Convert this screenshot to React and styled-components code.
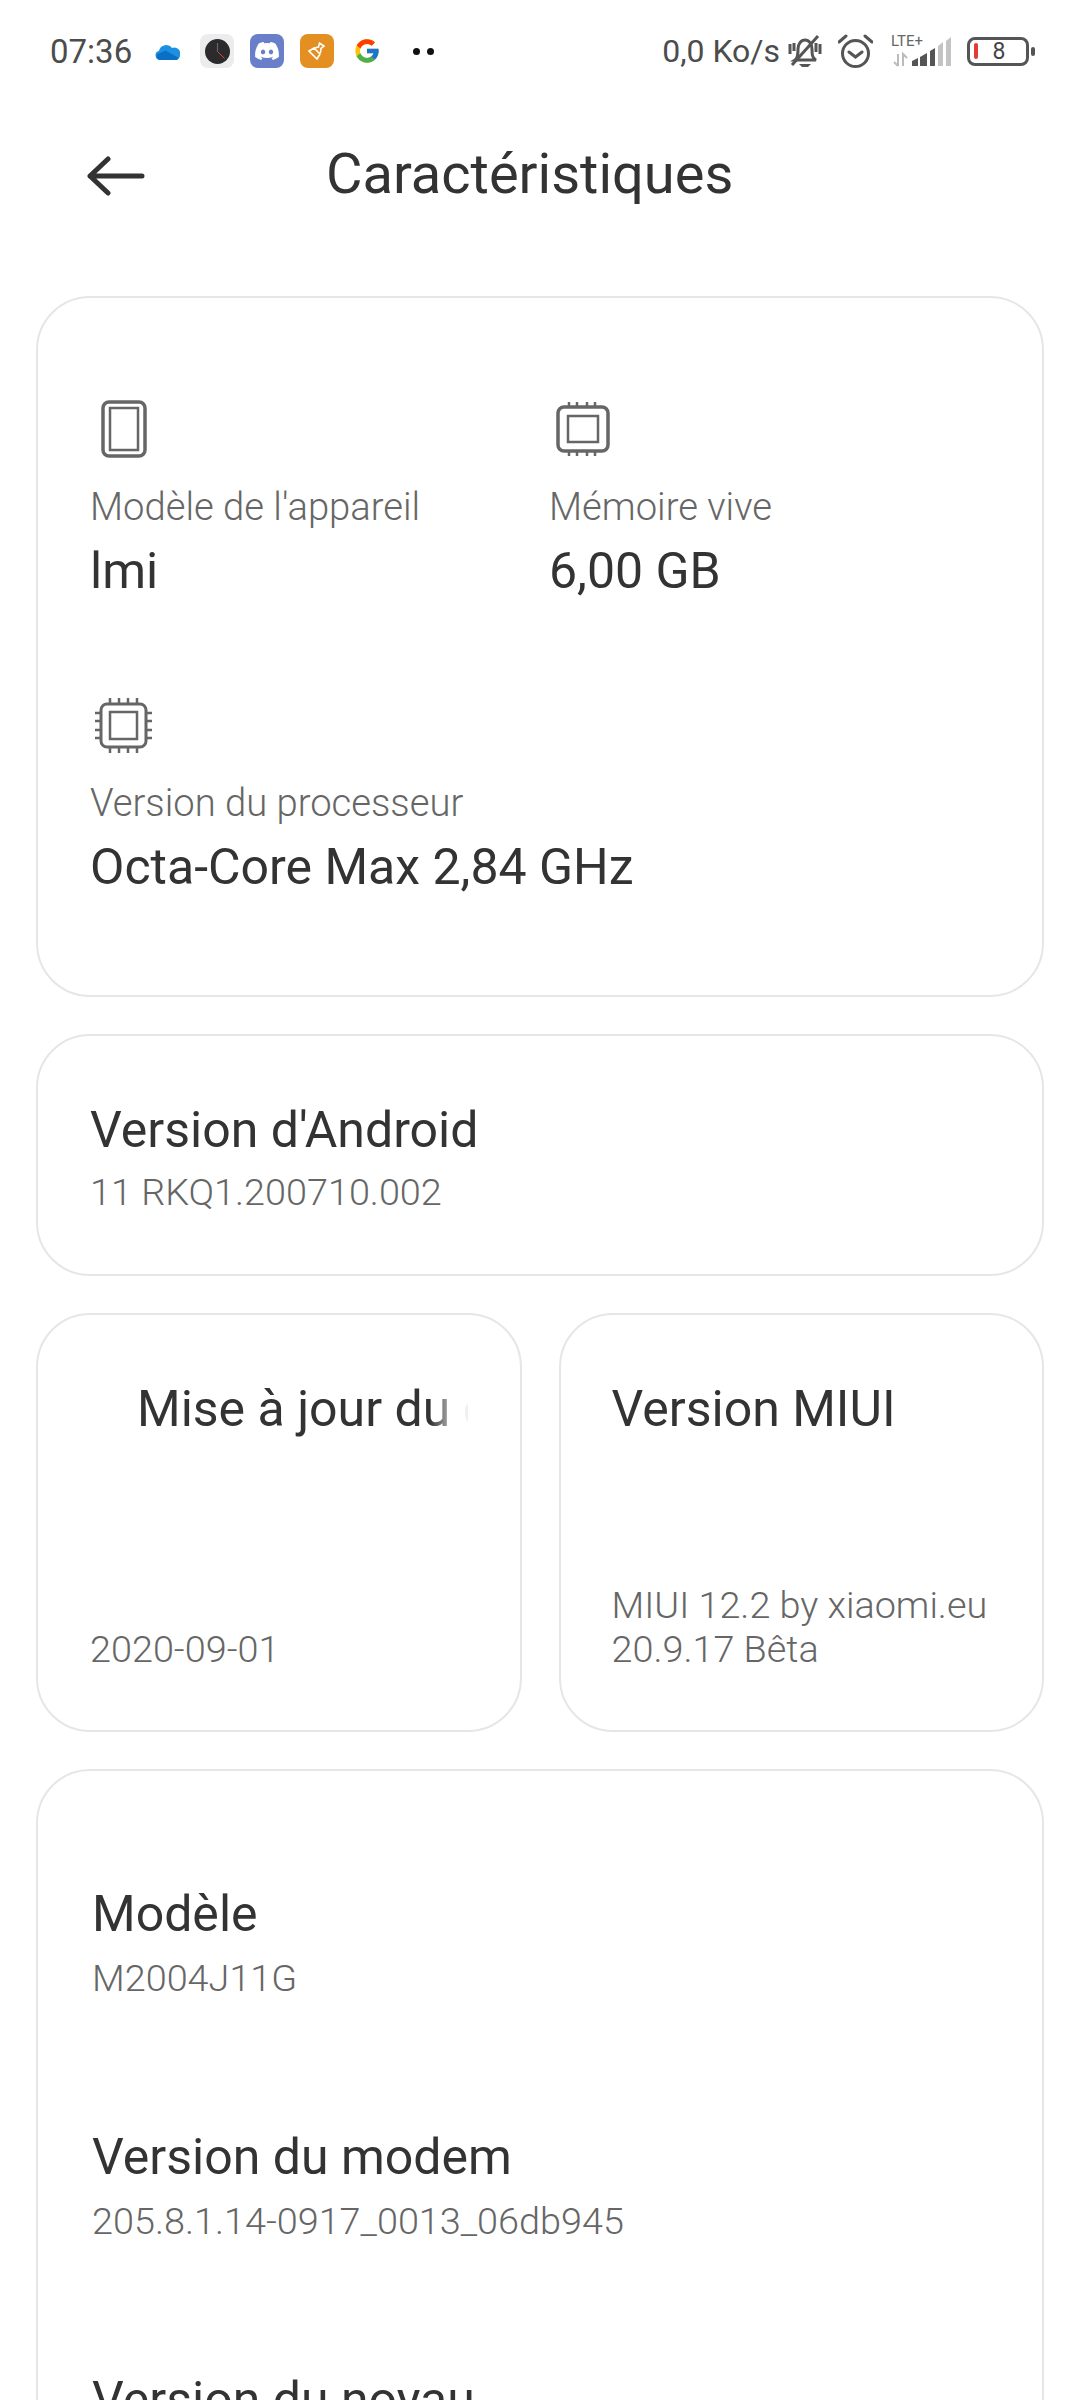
import React from "react";
import styled, { createGlobalStyle } from "styled-components";
import { FaDiscord } from "react-icons/fa";
import { FcGoogle } from "react-icons/fc";

const Global = createGlobalStyle`
  html, body {
    margin: 0;
    padding: 0;
    background: #fff;
    height: 2400px;
    overflow: hidden;
  }
  body {
    font-family: Roboto, "Noto Sans", sans-serif;
  }
`;

const Page = styled.div`
  width: 1080px;
  height: 2400px;
  overflow: hidden;
  background: #fff;
  color: #333;
`;

const StatusBar = styled.div`
  height: 102px;
  padding: 0 45px 0 50px;
  display: flex;
  align-items: center;
  justify-content: space-between;
  font-size: 33px;
  color: #4c4c4c;
`;

const StatusSide = styled.div`
  display: flex;
  align-items: center;
`;

const Time = styled.span`
  width: 100px;
`;

const AppTile = styled.div`
  width: 34px;
  height: 34px;
  margin-right: 16px;
  border-radius: 8px;
  background: ${(p) => p.$bg || "transparent"};
  display: flex;
  align-items: center;
  justify-content: center;
  color: #fff;
`;

const Dots = styled.div`
  display: flex;
  gap: 7px;
  margin-left: 13px;
  span {
    width: 7px;
    height: 7px;
    border-radius: 50%;
    background: #111;
  }
`;

const Speed = styled.span`
  font-size: 32px;
  margin-right: 8px;
`;

const Glyph = styled.div`
  display: flex;
  margin-left: ${(p) => p.$ml || "0"};
`;

const LteBlock = styled.div`
  width: 62px;
  height: 32px;
  margin: 0 15px 0 17px;
  position: relative;
  svg {
    display: block;
  }
`;

const LteText = styled.span`
  position: absolute;
  left: 1px;
  top: -3px;
  font-size: 15px;
  line-height: 18px;
  color: #666;
`;

const Battery = styled.div`
  display: flex;
  align-items: center;
  gap: 2px;
`;

const BatteryBody = styled.div`
  width: 62px;
  height: 29px;
  box-sizing: border-box;
  border: 3.5px solid #555;
  border-radius: 8px;
  display: flex;
  align-items: center;
  position: relative;
  justify-content: center;
  padding-left: 2px;
  font-size: 23px;
  color: #444;
`;

const BatteryLevel = styled.i`
  position: absolute;
  left: 3.5px;
  top: 3.5px;
  bottom: 3.5px;
  width: 4px;
  border-radius: 2px;
  background: #e53935;
`;

const BatteryCap = styled.i`
  width: 4px;
  height: 9px;
  border-radius: 2px;
  background: #555;
`;

const Header = styled.header`
  height: 148px;
  margin-bottom: 46px;
  display: flex;
  align-items: center;
  padding-left: 87px;
`;

const Title = styled.h1`
  margin: 0 0 5px 181px;
  font-size: 56px;
  font-weight: 400;
  color: #333;
`;

const Cards = styled.main`
  padding: 0 36px;
  display: flex;
  flex-direction: column;
  gap: 37px;
`;

const Card = styled.section`
  box-sizing: border-box;
  border: 2px solid #e6e6e6;
  border-radius: 54px;
  background: #fff;
  overflow: hidden;
  height: ${(p) => p.$h};
  padding: ${(p) => p.$pad};
  flex: none;
`;

const Specs = styled.div`
  display: grid;
  grid-template-columns: 459px 1fr;
  row-gap: 94px;
`;

const SpecCell = styled.div`
  display: flex;
  flex-direction: column;
  grid-column: ${(p) => (p.$wide ? "1 / -1" : "auto")};
`;

const IconSlot = styled.div`
  height: 58px;
  display: flex;
  align-items: center;
  padding-left: ${(p) => p.$indent || "0"};
`;

const Label = styled.div`
  font-size: 38.2px;
  line-height: 44px;
  margin-top: 27px;
  color: #666;
  font-weight: 300;
`;

const Value = styled.div`
  font-size: 50px;
  line-height: 62px;
  margin-top: 11px;
  color: #333;
`;

const Row = styled.div`
  display: grid;
  grid-template-columns: 1fr 1fr;
  gap: 37px;
`;

const TallCard = styled(Card)`
  min-width: 0;
  display: flex;
  flex-direction: column;
  justify-content: space-between;
`;

const Heading = styled.div`
  font-size: 50px;
  line-height: 62px;
  color: #333;
  white-space: nowrap;
`;

const Marquee = styled.div`
  overflow: hidden;
  padding-left: 47px;
  mask-image: linear-gradient(to right, #000 90%, rgba(0, 0, 0, 0.08) 98%);
`;

const Sub = styled.div`
  font-size: 37.8px;
  line-height: 44px;
  color: #666;
  font-weight: 300;
  margin-top: ${(p) => p.$top || "0"};
`;

const InfoList = styled.div`
  display: flex;
  flex-direction: column;
  gap: 126px;
`;

const Phone = () => (
  <svg width="46" height="58" viewBox="0 0 46 58" fill="none" stroke="#666">
    <rect x="2" y="2" width="42" height="54" rx="6" strokeWidth="3.5" />
    <rect x="9" y="8" width="28" height="42" strokeWidth="2.5" />
  </svg>
);

const Ram = () => (
  <svg width="54" height="54" viewBox="0 0 54 54" fill="none" stroke="#666">
    <rect x="2" y="5" width="50" height="44" rx="6" strokeWidth="3.5" />
    <rect x="12" y="14" width="30" height="26" strokeWidth="2.500" />
    <path d="M13 0v4M21 0v4M31 0v4M39 0v4M13 50v4M21 50v4M31 50v4M39 50v4" strokeWidth="2.500" />
  </svg>
);

const Cpu = () => (
  <svg width="57" height="55" viewBox="0 0 57 55" fill="none" stroke="#666">
    <rect x="6" y="6" width="45" height="43" rx="6" strokeWidth="3" />
    <rect x="15" y="14" width="27" height="27" strokeWidth="2.500" />
    <path d="M15 0v5M24 0v5M33 0v5M42 0v5M15 50v5M24 50v5M33 50v5M42 50v5M0 15h5M0 23h5M0 32h5M0 40h5M52 15h5M52 23h5M52 32h5M52 40h5" strokeWidth="2.500" />
  </svg>
);

const Cloud = () => (
  <svg width="25" height="17" viewBox="0 0 26 18">
    <path d="M5 18a5 5 0 0 1-1-9.800 8 8 0 0 1 14-3 6 6 0 0 1 4 12.800z" fill="#1e90e0" />
    <path d="M5 18a4 4 0 0 1-3-6l9-4 14 8q-1 2-3 2z" fill="#0c6fc6" />
  </svg>
);

const Clock = () => (
  <svg width="25" height="25" viewBox="0 0 25 25">
    <circle cx="12.500" cy="12.500" r="12.500" fill="#2b2b2d" />
    <path d="M12.500 4v8.500" stroke="#666" strokeWidth="1.200" />
    <path d="M12.500 12.500l7 7" stroke="#d9483b" strokeWidth="1" />
  </svg>
);

const Brush = () => (
  <svg width="18" height="18" viewBox="0 0 18 18" fill="none" stroke="#fff" strokeWidth="1.600">
    <path d="M1 9l5-3 6 6-3 5zM6.500 6l4-1 1-4 4.500 3-3 2.500-.5 4.500" />
  </svg>
);

const BellOff = () => (
  <svg width="34" height="32" viewBox="0 0 34 32" fill="none" stroke="#555" strokeWidth="3">
    <path d="M7 25c3-2 3-6 3-11 0-5 3-9 7-9s7 4 7 9c0 5 0 9 4 11z" />
    <path d="M30 1L4 30M2 9v10M6 8v8M28 8v9M32 9v10" />
    <path d="M11 29h12l-3 3h-6z" fill="#555" stroke="none" />
  </svg>
);

const Alarm = () => (
  <svg width="35" height="34" viewBox="0 0 35 34" fill="none" stroke="#555" strokeWidth="3">
    <circle cx="17.500" cy="19.500" r="13" />
    <path d="M11 18l6.500 5 6.500-5M1 8l7-6M34 8l-7-6" strokeLinecap="round" />
  </svg>
);

const Signal = () => (
  <svg width="62" height="32" viewBox="0 0 62 32">
    <path d="M22 31h6v-8l-6 3zM30 31h7V18l-7 4zM40 31h5V13l-5 3z" fill="#555" />
    <path d="M48 31h5V7l-5 4zM56 31h5V2l-5 4z" fill="#c4c4c4" />
    <path d="M8 19v12M4 27l4 4M13 31V19l4 4" stroke="#bbb" strokeWidth="2" fill="none" />
  </svg>
);

const Arrow = () => (
  <svg width="58" height="40" viewBox="0 0 58 40" fill="none" stroke="#333" strokeWidth="5" strokeLinecap="round" strokeLinejoin="round">
    <path d="M3 20h52M21 3L3 20l18 17" />
  </svg>
);

export default function App() {
  return (
    <Page>
      <Global />
      <StatusBar>
        <StatusSide>
          <Time>07:36</Time>
          <AppTile><Cloud /></AppTile>
          <AppTile $bg="#ececec"><Clock /></AppTile>
          <AppTile $bg="#6a7fc9"><FaDiscord size={26} /></AppTile>
          <AppTile $bg="#e38f22"><Brush /></AppTile>
          <AppTile><FcGoogle size={28} /></AppTile>
          <Dots><span /><span /></Dots>
        </StatusSide>
        <StatusSide>
          <Speed>0,0 Ko/s</Speed>
          <BellOff />
          <Glyph $ml="16px"><Alarm /></Glyph>
          <LteBlock>
            <LteText>LTE+</LteText>
            <Signal />
          </LteBlock>
          <Battery>
            <BatteryBody>
              <BatteryLevel />8
            </BatteryBody>
            <BatteryCap />
          </Battery>
        </StatusSide>
      </StatusBar>
      <Header>
        <Arrow />
        <Title>Caractéristiques</Title>
      </Header>
      <Cards>
        <Card $h="701px" $pad="102px 0 0 52px">
          <Specs>
            <SpecCell>
              <IconSlot $indent="11px"><Phone /></IconSlot>
              <Label>Modèle de l'appareil</Label>
              <Value>lmi</Value>
            </SpecCell>
            <SpecCell>
              <IconSlot $indent="7px"><Ram /></IconSlot>
              <Label>Mémoire vive</Label>
              <Value>6,00 GB</Value>
            </SpecCell>
            <SpecCell $wide>
              <IconSlot $indent="5px"><Cpu /></IconSlot>
              <Label>Version du processeur</Label>
              <Value>Octa-Core Max 2,84 GHz</Value>
            </SpecCell>
          </Specs>
        </Card>
        <Card $h="242px" $pad="63px 0 0 52px">
          <Heading>Version d'Android</Heading>
          <Sub $top="9px">11 RKQ1.200710.002</Sub>
        </Card>
        <Row>
          <TallCard $h="419px" $pad="63px 52px 59px">
            <Marquee>
              <Heading>Mise à jour du correctif</Heading>
            </Marquee>
            <Sub>2020-09-01</Sub>
          </TallCard>
          <TallCard $h="419px" $pad="63px 30px 59px 51px">
            <Heading>Version MIUI</Heading>
            <Sub>MIUI 12.2 by xiaomi.eu 20.9.17 Bêta</Sub>
          </TallCard>
        </Row>
        <Card $h="800px" $pad="112px 0 0 54px">
          <InfoList>
            <div>
              <Heading>Modèle</Heading>
              <Sub $top="11px">M2004J11G</Sub>
            </div>
            <div>
              <Heading>Version du modem</Heading>
              <Sub $top="11px">205.8.1.14-0917_0013_06db945</Sub>
            </div>
            <div>
              <Heading>Version du noyau</Heading>
            </div>
          </InfoList>
        </Card>
      </Cards>
    </Page>
  );
}
